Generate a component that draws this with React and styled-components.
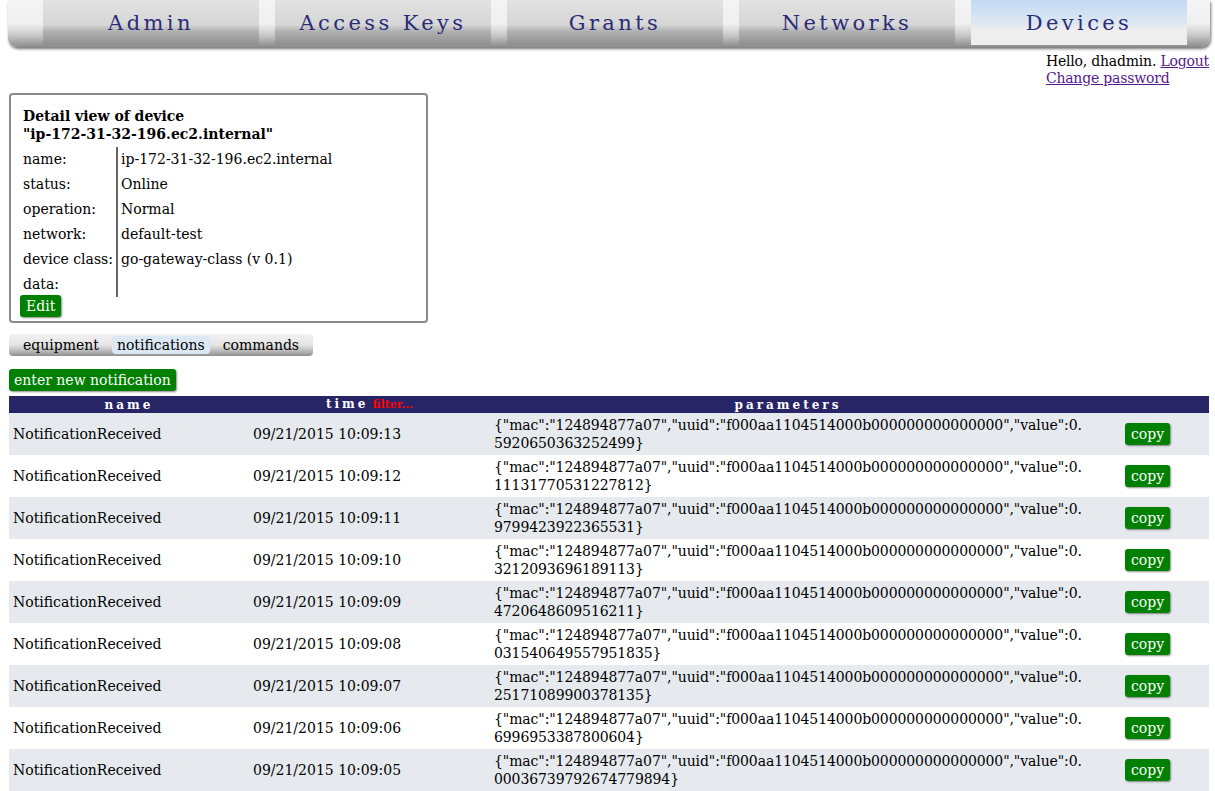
import React from "react";
import styled, { createGlobalStyle } from "styled-components";

const Global = createGlobalStyle`
  html, body { margin: 0; padding: 0; background: #fff; }
  body { font-family: "DejaVu Serif", serif; font-size: 14px; color: #000; }
`;

const Page = styled.div`
  padding: 0 6px 0 9px;
`;

const TopBar = styled.nav`
  display: flex;
  gap: 16px;
  margin: 0 -1px 0 -1px;
  padding: 0 0 2px 35px;
  height: 45px;
  border-radius: 0 0 9px 9px;
  background: linear-gradient(#f4f4f4 0%, #f0f0f0 50%, #c8c8c8 75%, #8c8c8c 100%);
  box-shadow: 1px 2px 3px rgba(0, 0, 0, 0.55);
`;

const TopTab = styled.a`
  width: 216px;
  height: 45px;
  display: flex;
  align-items: center;
  justify-content: center;
  font-family: "DejaVu Serif", serif;
  font-size: 21px;
  letter-spacing: 3.4px;
  color: #2b2b78;
  text-decoration: none;
  background: ${(p) =>
    p.$active
      ? "linear-gradient(#c3daf3 0%, #dfe8f2 55%, #eeeeee 65%, #eeeeee 100%)"
      : "linear-gradient(#e2e2e2 0%, #d6d6d6 55%, #b0b0b0 70%, #8e8e8e 100%)"};
`;

const UserBox = styled.div`
  display: flex;
  justify-content: flex-end;
  margin-top: 6px;
  line-height: 17px;
`;

const UserInner = styled.div`
  text-align: left;
  letter-spacing: -0.2px;
`;

const Link = styled.a`
  color: #551a8b;
  text-decoration: underline;
`;

const DetailBox = styled.section`
  width: 391px;
  margin-top: 6px;
  border: 2px solid #8a8a8a;
  border-radius: 4px;
  padding: 12px 12px 4px 12px;
`;

const DetailTitle = styled.div`
  font-weight: bold;
  line-height: 18px;
`;

const PropTable = styled.div`
  display: grid;
  grid-template-columns: 93px 1fr;
  margin-top: 4px;
`;

const PropLabel = styled.div`
  height: 25px;
  line-height: 25px;
  padding-right: 3px;
  white-space: nowrap;
`;

const PropValue = styled.div`
  height: 25px;
  line-height: 25px;
  padding-left: 3px;
  border-left: 2px solid #666;
  white-space: nowrap;
`;

const GreenButton = styled.button`
  display: inline-block;
  background: #008000;
  color: #fff;
  border: none;
  border-radius: 3px;
  box-shadow: 1px 1px 2px rgba(0, 0, 0, 0.45);
  font-family: "DejaVu Serif", serif;
  font-size: 14px;
  height: 22px;
  line-height: 22px;
  padding: 0 ${(p) => p.$pad || 6}px;
  cursor: pointer;
`;

const EditRow = styled.div`
  margin-left: -3px;
  margin-top: -2px;
`;

const SubTabs = styled.div`
  display: inline-flex;
  align-items: center;
  gap: 8px;
  margin-top: 11px;
  height: 22px;
  padding: 0 9px 0 9px;
  border-radius: 4px;
  background: linear-gradient(#f2f2f2 0%, #e4e4e4 50%, #bdbdbd 75%, #8e8e8e 100%);
`;

const SubTab = styled.span`
  padding: 0 5px;
  height: 18px;
  line-height: 18px;
  border-radius: 4px;
  background: ${(p) => (p.$active ? "#dce7f4" : "transparent")};
`;

const ActionRow = styled.div`
  margin-top: 13px;
`;

const Table = styled.table`
  margin-top: 5px;
  width: 1200px;
  border-collapse: collapse;
  table-layout: fixed;
`;

const Th = styled.th`
  background: #282566;
  color: #fff;
  font-size: 12px;
  font-weight: bold;
  letter-spacing: 3px;
  height: 16px;
  line-height: 16px;
  padding: 0;
  text-align: center;
`;

const Filter = styled.span`
  color: #ff0000;
  font-size: 11px;
  letter-spacing: 0;
  margin-left: 4px;
`;

const Tr = styled.tr`
  background: ${(p) => (p.$odd ? "#e6eaee" : "#ffffff")};
  height: 42px;
`;

const Td = styled.td`
  padding: 0 4px;
  vertical-align: middle;
  line-height: 18px;
  text-align: ${(p) => p.$align || "left"};
`;

const ParamsTd = styled(Td)`
  word-break: break-all;
  letter-spacing: -0.1px;
`;

const rows = [
  ["13", "0.5920650363252499"],
  ["12", "0.11131770531227812"],
  ["11", "0.9799423922365531"],
  ["10", "0.3212093696189113"],
  ["09", "0.4720648609516211"],
  ["08", "0.031540649557951835"],
  ["07", "0.25171089900378135"],
  ["06", "0.6996953387800604"],
  ["05", "0.00036739792674779894"],
];

const props = [
  ["name:", "ip-172-31-32-196.ec2.internal"],
  ["status:", "Online"],
  ["operation:", "Normal"],
  ["network:", "default-test"],
  ["device class:", "go-gateway-class (v 0.1)"],
  ["data:", ""],
];

export default function App() {
  return (
    <>
      <Global />
      <Page>
        <TopBar>
          <TopTab>Admin</TopTab>
          <TopTab>Access Keys</TopTab>
          <TopTab>Grants</TopTab>
          <TopTab>Networks</TopTab>
          <TopTab $active>Devices</TopTab>
        </TopBar>
        <UserBox>
          <UserInner>
            Hello, dhadmin. <Link href="#">Logout</Link>
            <br />
            <Link href="#">Change password</Link>
          </UserInner>
        </UserBox>
        <DetailBox>
          <DetailTitle>
            Detail view of device
            <br />
            "ip-172-31-32-196.ec2.internal"
          </DetailTitle>
          <PropTable>
            {props.map(([k, v]) => (
              <React.Fragment key={k}>
                <PropLabel>{k}</PropLabel>
                <PropValue>{v}</PropValue>
              </React.Fragment>
            ))}
          </PropTable>
          <EditRow>
            <GreenButton>Edit</GreenButton>
          </EditRow>
        </DetailBox>
        <SubTabs>
          <SubTab>equipment</SubTab>
          <SubTab $active>notifications</SubTab>
          <SubTab>commands</SubTab>
        </SubTabs>
        <ActionRow>
          <GreenButton $pad={5}>enter new notification</GreenButton>
        </ActionRow>
        <Table>
          <colgroup>
            <col style={{ width: 240 }} />
            <col style={{ width: 241 }} />
            <col style={{ width: 596 }} />
            <col style={{ width: 123 }} />
          </colgroup>
          <thead>
            <tr>
              <Th>name</Th>
              <Th>
                time<Filter>filter...</Filter>
              </Th>
              <Th>parameters</Th>
              <Th></Th>
            </tr>
          </thead>
          <tbody>
            {rows.map(([sec, val], i) => (
              <Tr key={sec} $odd={i % 2 === 0}>
                <Td>NotificationReceived</Td>
                <Td>09/21/2015 10:09:{sec}</Td>
                <ParamsTd>
                  {`{"mac":"124894877a07","uuid":"f000aa1104514000b000000000000000","value":${val}}`}
                </ParamsTd>
                <Td $align="center">
                  <GreenButton $pad={6}>copy</GreenButton>
                </Td>
              </Tr>
            ))}
          </tbody>
        </Table>
      </Page>
    </>
  );
}
